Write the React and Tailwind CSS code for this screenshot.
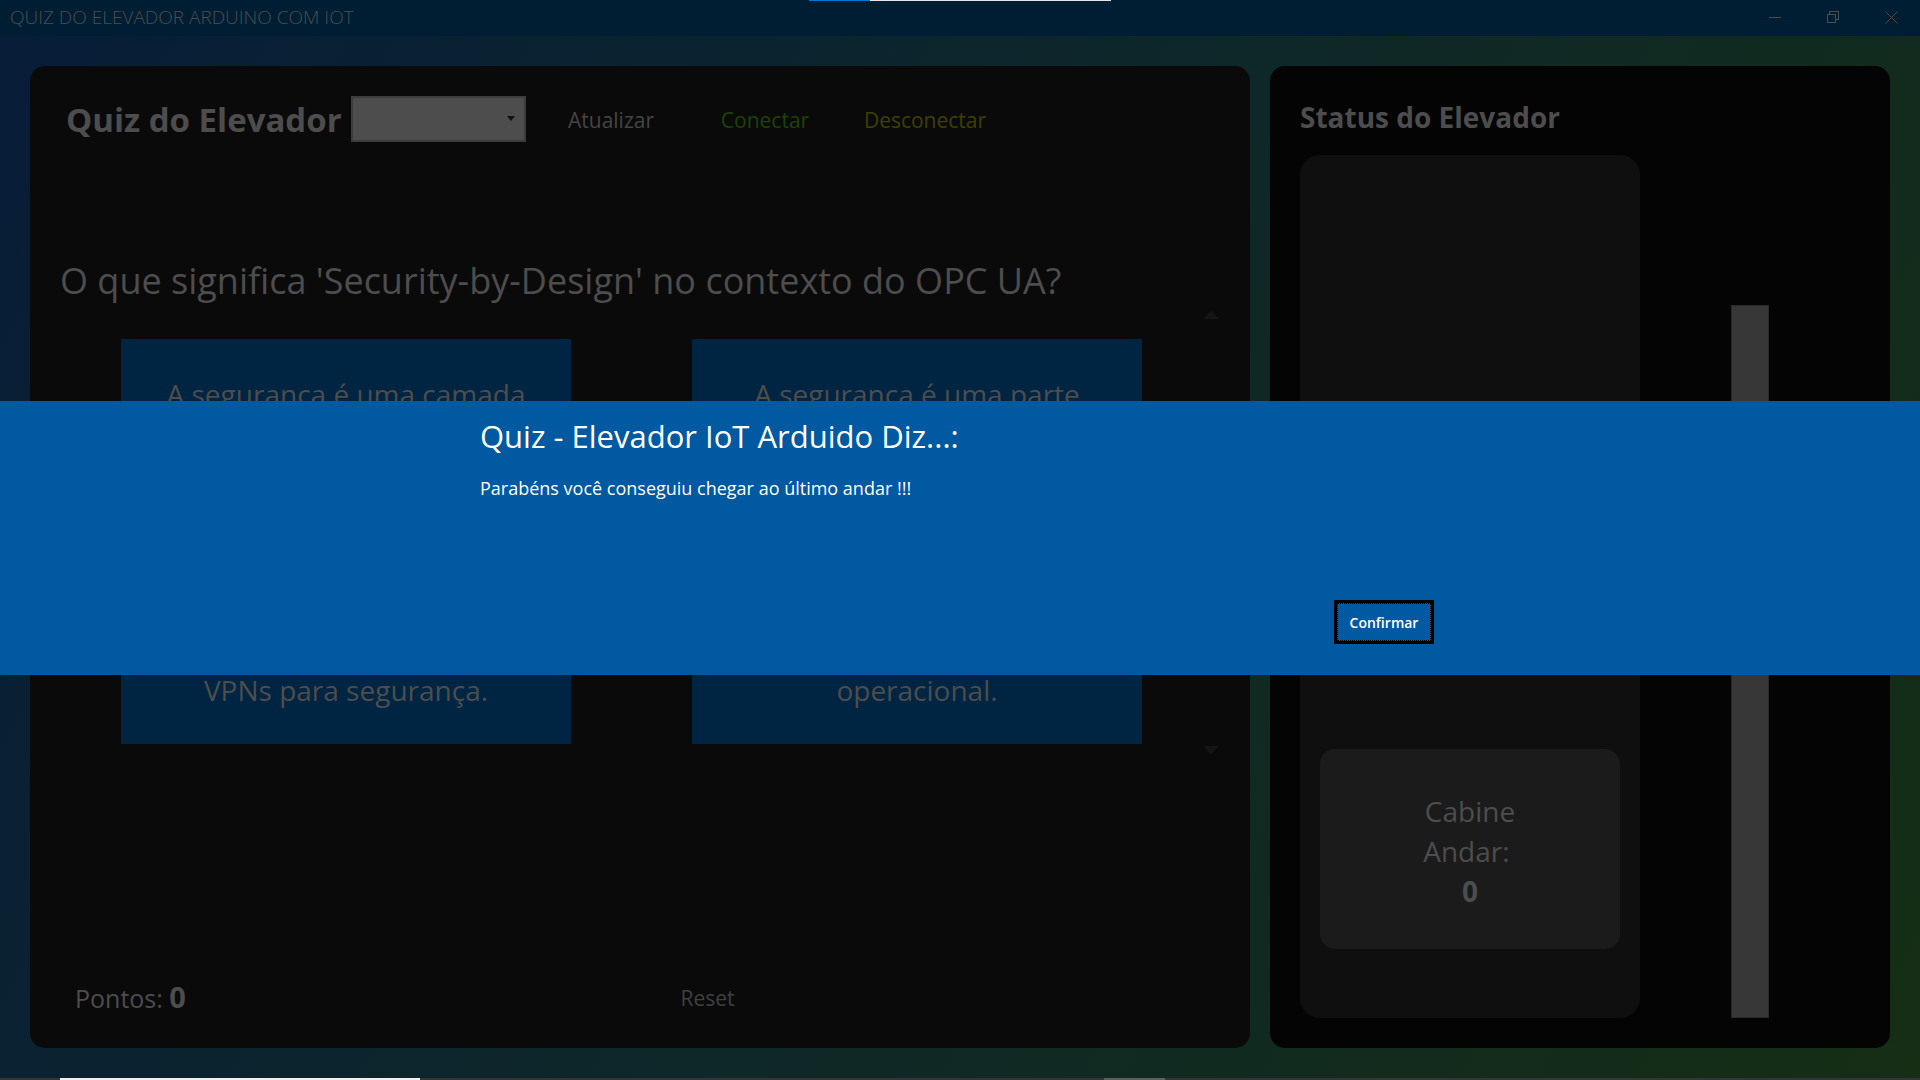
import React from "react";

const answers = [
  { first: "A segurança é uma camada", last: "VPNs para segurança." },
  { first: "A segurança é uma parte", last: "operacional." },
];

function TitleBar() {
  return (
    <header className="flex h-9 items-center justify-between bg-[#001e33] text-[#4d4d4d]">
      <h1 className="pb-0.5 pl-2.5 text-[19px] leading-8 font-light">QUIZ DO ELEVADOR ARDUINO COM IOT</h1>
      <div className="flex h-full pb-0.5">
        <button aria-label="Minimizar" className="flex w-[58px] items-center justify-center">
          <svg width="13" height="13" viewBox="0 0 13 13" shapeRendering="crispEdges"><path d="M0 6.5h12" stroke="currentColor" /></svg>
        </button>
        <button aria-label="Restaurar" className="flex w-[58px] items-center justify-center">
          <svg width="13" height="13" viewBox="0 0 13 13" fill="none" stroke="currentColor" shapeRendering="crispEdges">
            <path d="M.5 3.5h8v8h-8zM2.5 3.5v-3h9v8h-3" />
          </svg>
        </button>
        <button aria-label="Fechar" className="flex w-[58px] items-center justify-center">
          <svg width="13" height="13" viewBox="0 0 13 13" stroke="currentColor"><path d="M.5 .5l12 12M12.5 .5l-12 12" /></svg>
        </button>
      </div>
    </header>
  );
}

function QuizPanel() {
  return (
    <section className="flex flex-col rounded-[15px] bg-[#0a0a0a] p-[30px]">
      <div className="flex h-[46px] items-center pl-1.5">
        <h2 className="w-[285px] pt-0.5 text-[33px] leading-[46px] font-bold whitespace-nowrap">Quiz do Elevador</h2>
        <div className="relative h-[46px] w-[175px]">
          <select aria-label="Porta" className="h-full w-full appearance-none border-2 border-[#3c3c3c] bg-[#4d4d4d]" />
          <svg className="pointer-events-none absolute top-5 right-[11px]" width="8" height="5" viewBox="0 0 8 5"><path d="M0 0h8L4 5z" fill="#111" /></svg>
        </div>
        <button className="ml-[26px] w-[118px] pt-0.5 text-[21px] leading-[46px] text-[#454545]">Atualizar</button>
        <button className="ml-[42px] w-[106px] pt-0.5 text-[21px] leading-[46px] text-[#1f4208]">Conectar</button>
        <button className="ml-[35px] w-[144px] pt-0.5 text-[21px] leading-[46px] text-[#404000]">Desconectar</button>
      </div>
      <p className="mt-28 text-[36px] leading-[54px]">O que significa 'Security-by-Design' no contexto do OPC UA?</p>
      <div className="flex h-[450px]">
        <div className="grid flex-1 grid-cols-2 pt-[31px] pb-[14px]">
          {answers.map((a) => (
            <button
              key={a.first}
              className="mr-[60px] ml-[61px] flex flex-col items-center justify-between bg-[#002542] pt-[35px] pb-[34px] text-[28px] leading-10"
            >
              <span>{a.first}</span>
              <span>{a.last}</span>
            </button>
          ))}
        </div>
        <div className="flex w-[18px] flex-col items-center justify-between pt-[3px] pb-1">
          <button aria-label="Rolar para cima">
            <svg className="block" width="16" height="8" viewBox="0 0 16 8"><path d="M0 8h16L8 0z" fill="#151515" /></svg>
          </button>
          <button aria-label="Rolar para baixo">
            <svg className="block" width="16" height="8" viewBox="0 0 16 8"><path d="M0 0h16L8 8z" fill="#151515" /></svg>
          </button>
        </div>
      </div>
      <div className="mt-auto grid grid-cols-2 items-center pl-[15px]">
        <p className="text-[25px] leading-10">
          Pontos: <strong className="text-[29px]">0</strong>
        </p>
        <div><button className="ml-[33px] block text-[21px] leading-10 text-[#404040]">Reset</button></div>
      </div>
    </section>
  );
}

function StatusPanel() {
  return (
    <section className="flex flex-col rounded-[15px] bg-[#040404] p-[30px]">
      <h2 className="text-[28px] leading-[42px] font-bold">Status do Elevador</h2>
      <div className="mt-[17px] flex flex-1">
        <div className="flex w-[340px] flex-col justify-end rounded-[20px] bg-[#0f0f0f] px-5 pb-[69px]">
          <div className="flex h-[200px] flex-col items-center justify-center rounded-[15px] bg-[#1b1b1b] pt-1 text-[28px] leading-10">
            <span>Cabine</span>
            <span className="whitespace-pre">Andar: </span>
            <strong>0</strong>
          </div>
        </div>
        <div className="flex flex-1 items-end justify-center pt-[150px]">
          <div role="progressbar" aria-label="Andar" aria-valuenow={0} className="h-full w-[38px] border border-[#2a2a2a] bg-[#373737]" />
        </div>
      </div>
    </section>
  );
}

function Dialog() {
  return (
    <div className="absolute inset-0 flex items-center pb-1">
      <div role="dialog" aria-labelledby="dlg-title" className="w-full bg-[#0059a1] text-white">
        <div className="mx-auto flex h-[274px] w-1/2 flex-col pt-2.5">
          <h2 id="dlg-title" className="text-[31px] leading-[50px]">Quiz - Elevador IoT Arduido Diz...:</h2>
          <p className="mt-[15px] text-[18px] leading-6">Parabéns você conseguiu chegar ao último andar !!!</p>
          <div className="mt-auto flex justify-end pr-1.5 pb-[31px]">
            <button className="h-11 w-[100px] border-3 border-black text-[14px] font-semibold">
              <span className="flex h-full items-center justify-center border border-dotted border-black">Confirmar</span>
            </button>
          </div>
        </div>
      </div>
    </div>
  );
}

export default function App() {
  return (
    <div className="relative flex min-h-screen flex-col overflow-hidden bg-[linear-gradient(119deg,#071d39,#0e2729_50%,#152e14)] font-['Open_Sans','Noto_Sans',sans-serif] text-[#4d4d4d]">
      <TitleBar />
      <main className="grid flex-1 grid-cols-[61fr_31fr] gap-5 px-[30px] pt-[30px] pb-8">
        <QuizPanel />
        <StatusPanel />
      </main>
      <div className="absolute inset-x-0 top-0 flex h-px justify-center">
        <div className="w-[61px] bg-[#0078d7]" />
        <div className="w-[241px] bg-[#e6e6e6]" />
      </div>
      <div className="absolute inset-x-0 bottom-0 flex h-0.5 bg-[#333636]">
        <div className="ml-[60px] w-[360px] bg-[#f0f0f0]" />
        <div className="ml-[684px] w-[61px] bg-[#59605d]" />
      </div>
      <Dialog />
    </div>
  );
}
